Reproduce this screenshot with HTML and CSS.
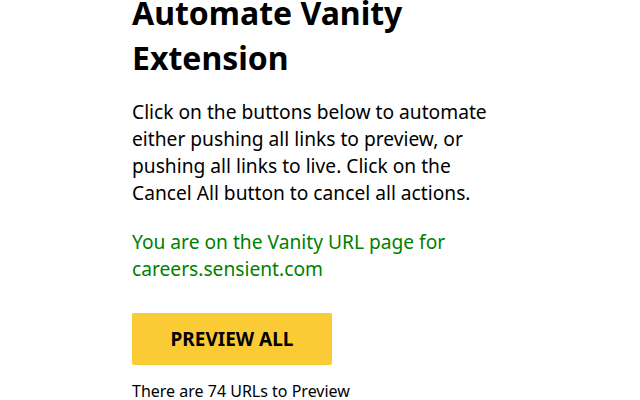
FILE: index.html
```html
<!DOCTYPE html>
<html lang="en">
<head>
<meta charset="utf-8">
<title>Automate Vanity Extension</title>
<link rel="stylesheet" href="styles.css">
</head>
<body>
<main class="panel">
  <h1 class="title">Automate Vanity Extension</h1>
  <p class="intro">Click on the buttons below to automate either pushing all links to preview, or pushing all links to live. Click on the Cancel All button to cancel all actions.</p>
  <p class="status">You are on the Vanity URL page for careers.sensient.com</p>
  <button class="btn-preview" type="button">PREVIEW ALL</button>
  <p class="count">There are 74 URLs to Preview</p>
</main>
</body>
</html>
```
FILE: styles.css
```css
html, body {
  margin: 0;
  padding: 0;
  background: #ffffff;
}
body {
  font-family: "Noto Sans", "Open Sans", sans-serif;
  color: #000;
  overflow: hidden;
}
.panel {
  width: 360px;
  margin-left: 132px;
  display: flex;
  flex-direction: column;
  align-items: flex-start;
}
.title {
  font-size: 32px;
  line-height: 44.8px;
  font-weight: 700;
  margin: -9px 0 17px;
}
.intro {
  font-size: 19.2px;
  line-height: 27px;
  margin: 0 0 22px;
}
.status {
  font-size: 19.2px;
  line-height: 27px;
  color: #008000;
  margin: 0 0 31px;
}
.btn-preview {
  width: 200px;
  height: 52px;
  border: none;
  border-radius: 2px;
  background: #fbcb35;
  color: #000;
  font-family: inherit;
  font-size: 19px;
  font-weight: 700;
  padding: 0;
  cursor: pointer;
}
.count {
  font-size: 16px;
  line-height: 24px;
  margin: 14px 0 0;
}
```
